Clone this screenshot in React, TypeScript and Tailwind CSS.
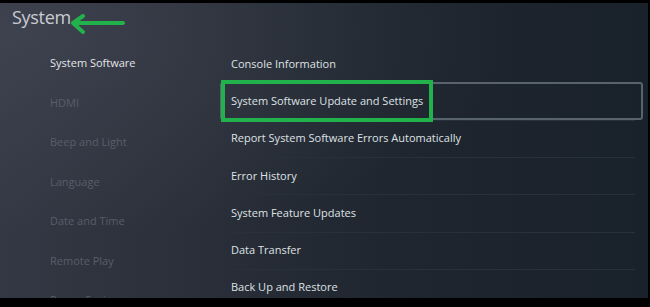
import React from "react";

const leftItems = [
  "System Software",
  "HDMI",
  "Beep and Light",
  "Language",
  "Date and Time",
  "Remote Play",
  "Power Saving",
];

const rightItems = [
  "Console Information",
  "System Software Update and Settings",
  "Report System Software Errors Automatically",
  "Error History",
  "System Feature Updates",
  "Data Transfer",
  "Back Up and Restore",
];

export default function App() {
  return (
    <div
      className="w-[650px] h-[307px] bg-black overflow-hidden"
      style={{ fontFamily: '"Open Sans", "Liberation Sans", sans-serif' }}
    >
      <div className="relative mt-[3px] w-[648px] h-[295px] overflow-hidden bg-[linear-gradient(90deg,#343844_0%,#2a2f39_30%,#1f262f_60%,#19212a_100%)]">
        <div className="absolute inset-0 bg-[radial-gradient(ellipse_at_5%_10%,rgba(80,86,100,0.35),transparent_55%)]" />
        <div className="relative flex flex-col">
          <div className="h-[40px] pl-[12px] pt-[1px] text-[18px] leading-[26px] text-[#c9ccd2] tracking-[-0.3px]">
            System
          </div>
          <div className="flex">
            <div className="w-[220px] flex flex-col pl-[50px] mt-[0.5px]">
              {leftItems.map((t, i) => (
                <div
                  key={t}
                  className={`h-[39.5px] flex items-center text-[11px] ${
                    i === 0 ? "text-[#e4e5e8]" : "text-[#575e69]"
                  }`}
                >
                  {t}
                </div>
              ))}
            </div>
            <div className="w-[423px] flex flex-col mt-[2.6px]">
              {rightItems.map((t, i) => (
                <div
                  key={t}
                  className="relative h-[37.2px] flex items-center pl-[11px] text-[11px] text-[#dfe1e4]"
                >
                  {i === 1 && (
                    <div className="absolute left-0 right-0 -top-[0.5px] -bottom-[0.5px] rounded-[3px] border-2 border-[#59636d]" />
                  )}
                  <span className="relative">{t}</span>
                  {i !== 0 && i !== 1 && (
                    <div className="absolute left-[11px] right-[8px] top-0 h-px bg-[#28303a]" />
                  )}
                </div>
              ))}
            </div>
          </div>
        </div>
        {/* green annotation box */}
        <div className="absolute left-[221px] top-[77px] w-[212px] h-[42px] border-[4px] border-[#22b24c]" />
        {/* green arrow */}
        <svg
          className="absolute left-[68px] top-[10px]"
          width="60"
          height="26"
          viewBox="0 0 60 26"
        >
          <g stroke="#22b24c" strokeWidth="4" strokeLinecap="round" strokeLinejoin="round" fill="none">
            <line x1="6" y1="10" x2="55" y2="10" />
            <polyline points="15,3 5,10 15,19" />
          </g>
        </svg>
      </div>
    </div>
  );
}
